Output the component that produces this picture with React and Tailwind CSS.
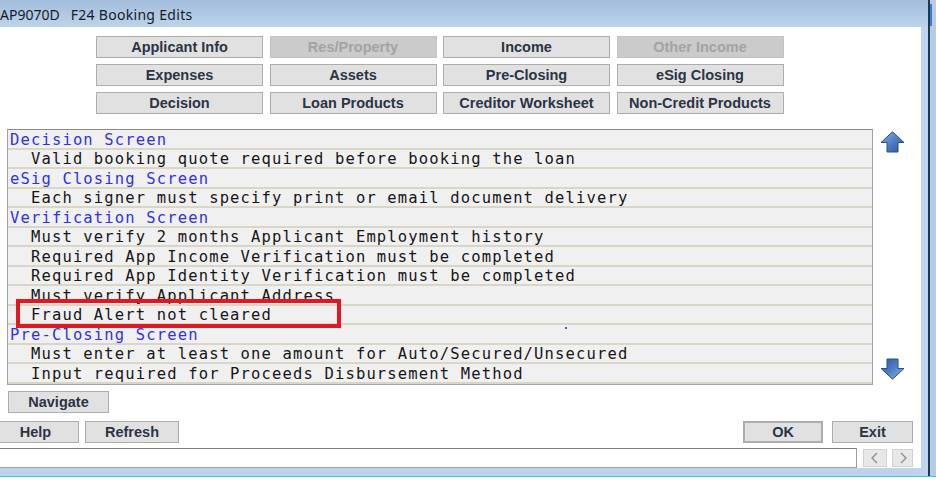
import React from 'react';

const navButtons = [
    { label: 'Applicant Info' },
    { label: 'Res/Property', disabled: true },
    { label: 'Income' },
    { label: 'Other Income', disabled: true },
    { label: 'Expenses' },
    { label: 'Assets' },
    { label: 'Pre-Closing' },
    { label: 'eSig Closing' },
    { label: 'Decision' },
    { label: 'Loan Products' },
    { label: 'Creditor Worksheet' },
    { label: 'Non-Credit Products' },
];

const rows = [
    { text: 'Decision Screen', header: true },
    { text: 'Valid booking quote required before booking the loan' },
    { text: 'eSig Closing Screen', header: true },
    { text: 'Each signer must specify print or email document delivery' },
    { text: 'Verification Screen', header: true },
    { text: 'Must verify 2 months Applicant Employment history' },
    { text: 'Required App Income Verification must be completed' },
    { text: 'Required App Identity Verification must be completed' },
    { text: 'Must verify Applicant Address' },
    { text: 'Fraud Alert not cleared' },
    { text: 'Pre-Closing Screen', header: true },
    { text: 'Must enter at least one amount for Auto/Secured/Unsecured' },
    { text: 'Input required for Proceeds Disbursement Method' },
];

const btnFont = { fontFamily: '"Liberation Sans", Arial, sans-serif' };

const WinButton = ({ children, disabled, className = '' }) => (
    <button
        type="button"
        style={btnFont}
        className={`flex items-center justify-center h-[22px] text-[14.5px] font-bold border leading-none ${
            disabled
                ? 'bg-[#cbcbcb] border-[#c2c2c2] text-[#a3a3a3]'
                : 'bg-[#e1e1e1] border-[#adadad] text-[#2b3444]'
        } ${className}`}
    >
        {children}
    </button>
);

const Arrow = ({ down }) => (
    <svg width="25" height="22" viewBox="0 0 25 22" className={down ? 'rotate-180' : ''}>
        <defs>
            <linearGradient id={down ? 'ga-d' : 'ga-u'} x1="0" y1="0" x2="1" y2="1">
                <stop offset="0" stopColor="#8fb1e2" />
                <stop offset="0.5" stopColor="#4f7ec6" />
                <stop offset="1" stopColor="#2c5598" />
            </linearGradient>
        </defs>
        <path
            d="M12.5 0.8 L24 11.5 L18 11.5 L18 21 L7 21 L7 11.5 L1 11.5 Z"
            fill={`url(#${down ? 'ga-d' : 'ga-u'})`}
            stroke="#2a4e8a"
            strokeWidth="1"
            strokeLinejoin="round"
        />
    </svg>
);

export default function App() {
    return (
        <div className="w-[936px] h-[484px] bg-white overflow-hidden flex flex-col">
            <div className="flex h-[476px]">
                {/* main window area */}
                <div className="w-[921px] flex flex-col">
                    <div
                        className="h-[27px] flex items-center pt-[2px] bg-gradient-to-b from-[#a3bddb] to-[#bdd3eb] text-[14px] text-[#151c26]"
                        style={{ fontFamily: '"Noto Sans", "Open Sans", sans-serif' }}
                    >
                        <span>AP9070D</span>
                        <span className="ml-[11px] tracking-[0.3px]">F24 Booking Edits</span>
                    </div>

                    <div className="flex flex-col h-[441px] bg-white">
                        {/* nav buttons */}
                        <div className="ml-[96px] mt-[9px] grid grid-cols-[167px_167px_167px_167px] gap-x-[6.5px] gap-y-[6px] w-[690px]">
                            {navButtons.map((b) => (
                                <WinButton key={b.label} disabled={b.disabled}>
                                    {b.label}
                                </WinButton>
                            ))}
                        </div>

                        {/* edits list */}
                        <div className="flex mt-[15px]">
                            <div className="relative ml-[7px] w-[866px] h-[256px] border border-[#a3a3a3] border-t-[#8a8a8a] border-t-dotted bg-[#f0f0f0]">
                                {rows.map((r) => (
                                    <div
                                        key={r.text}
                                        className="h-[19.5px] pt-[3px] border-b-2 border-[#d9d6c6] flex items-center whitespace-pre text-[15.5px] tracking-[1.15px] leading-none"
                                        style={{ fontFamily: '"DejaVu Sans Mono", "Liberation Mono", monospace' }}
                                    >
                                        {r.header ? (
                                            <span className="pl-[2px] text-[#3030f0]">{r.text}</span>
                                        ) : (
                                            <span className="pl-[2px] text-[#161616]">{'  ' + r.text}</span>
                                        )}
                                    </div>
                                ))}
                                <div className="absolute left-[8px] top-[169px] w-[325px] h-[29px] border-[4px] border-[#e3171f]" />
                                <div className="absolute left-[557px] top-[197px] w-[2px] h-[2px] bg-[#3a5fc8]" />
                            </div>
                            <div className="ml-[7px] flex flex-col justify-between pt-[2px] pb-[5px]">
                                <Arrow />
                                <Arrow down />
                            </div>
                        </div>

                        <WinButton className="ml-[8px] mt-[6px] w-[101px]">Navigate</WinButton>

                        <div className="flex mt-[8px]">
                            <WinButton className="-ml-[8px] w-[87px]">Help</WinButton>
                            <WinButton className="ml-[6px] w-[94px]">Refresh</WinButton>
                            <WinButton className="ml-[564px] w-[80px] border-2 border-[#3d7fd6]">OK</WinButton>
                            <WinButton className="ml-[9px] w-[81px]">Exit</WinButton>
                        </div>

                        <div className="flex items-center mt-[5px] h-[20px]">
                            <div className="-ml-[2px] w-[859px] h-[20px] bg-white border border-[#9c9c9c] border-t-[#7c7c7c]" />
                            <div className="ml-[6px] w-[24px] h-[18px] bg-[#e8e8e8] border border-[#d0d0d0] flex items-center justify-center">
                                <svg width="10" height="12" viewBox="0 0 10 12">
                                    <path d="M7 1 L2 6 L7 11" fill="none" stroke="#8c8c8c" strokeWidth="1.3" />
                                </svg>
                            </div>
                            <div className="ml-[5px] w-[21px] h-[18px] bg-[#e8e8e8] border border-[#d0d0d0] flex items-center justify-center">
                                <svg width="10" height="12" viewBox="0 0 10 12">
                                    <path d="M3 1 L8 6 L3 11" fill="none" stroke="#8c8c8c" strokeWidth="1.3" />
                                </svg>
                            </div>
                        </div>
                    </div>

                    <div className="h-[8px] bg-[#bcd3ec]" />
                </div>

                {/* right window frame */}
                <div className="w-[7px] flex flex-col">
                    <div className="h-[27px] bg-gradient-to-b from-[#a3bddb] to-[#bdd3eb]" />
                    <div className="flex-1 bg-[#bfd5ed]" />
                </div>
                <div className="w-[2px] bg-[#22384a]" />
                <div className="w-[6px] flex flex-col bg-[#b4cde8]">
                    <div className="mt-[4px] h-[22px] w-[2px] bg-[#2f7fe0]" />
                </div>
            </div>
            <div className="h-[1px] bg-[#3fc6e6]" />
            <div className="flex-1 bg-white" />
        </div>
    );
}
